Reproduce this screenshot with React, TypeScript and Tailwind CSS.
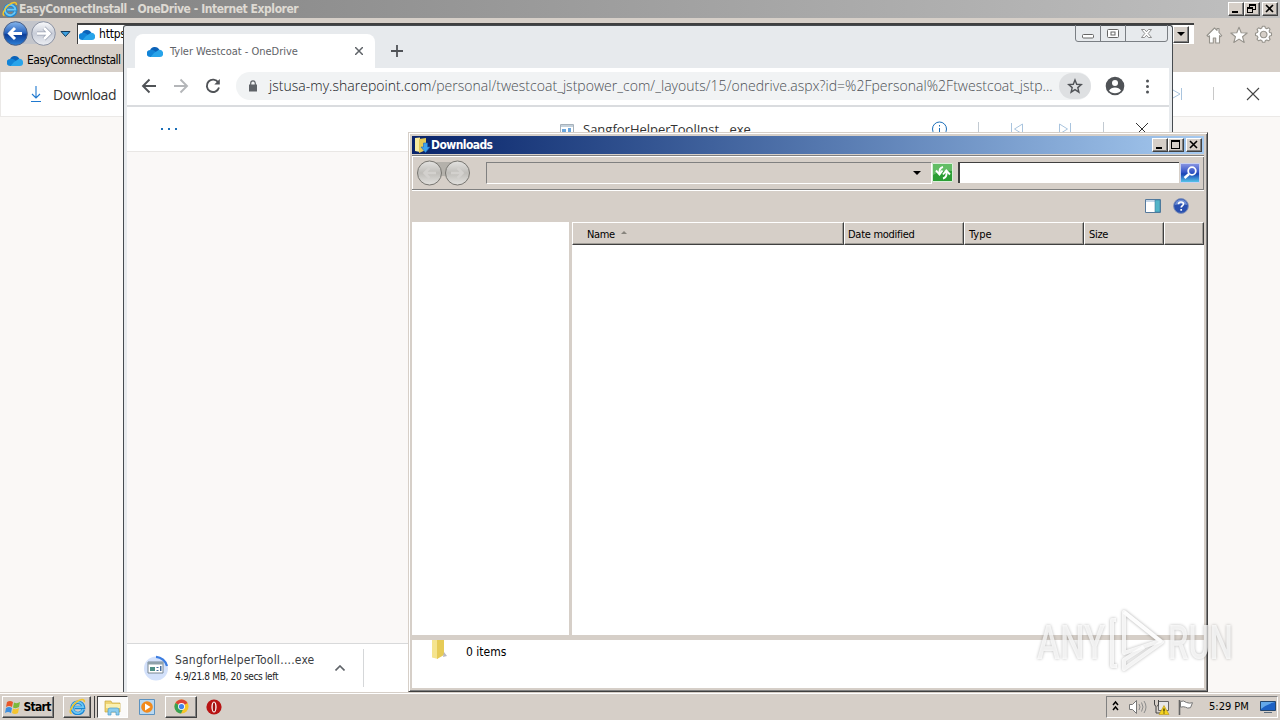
import type { ReactNode } from 'react'
import clsx from 'clsx'

const RAISED = 'border border-t-white border-l-white border-r-[#404040] border-b-[#404040] bg-[#d6cfc8] shadow-[inset_-1px_-1px_0_#808080]'

const OneDrive = ({ className }: { className?: string }) => (
  <svg viewBox="0 0 16 11" className={clsx('h-[11px] w-4 shrink-0', className)}>
    <path d="M3 4.5A5 5 0 0 1 12.4 4L9 9 2 8z" fill="#0b62b8" />
    <path d="M3.2 4a3.5 3.5 0 0 0 0 7H8l4-3-5-3.4A4 4 0 0 0 3.2 4z" fill="#1184d8" />
    <path d="M7 7l5-3.2A3.6 3.6 0 0 1 13 11H3.5z" fill="#28a4ea" />
  </svg>
)

const IeLogo = ({ className }: { className?: string }) => (
  <svg viewBox="0 0 16 16" className={clsx('shrink-0', className)}>
    <path d="M13.4 10.8A5.3 5.3 0 1 1 13.6 8.9H5.2" fill="none" stroke="#1c87d4" strokeWidth="3.4" />
    <path d="M13.2 10.5A5.2 5.2 0 1 1 13.4 8.6H5.2" fill="none" stroke="#6cc7f4" strokeWidth="1.8" />
    <path d="M2.500 14.500C-.6 14 2 8.200 6.500 4.200 10.200 1 15 .2 14.400 4" fill="none" stroke="#f2c52c" strokeWidth="1.500" />
  </svg>
)

interface CaptionProps {
  kind: 'min' | 'max' | 'restore' | 'close'
}

const Caption = ({ kind }: CaptionProps) => (
  <div className={clsx('h-[14px] w-4', RAISED)}>
    <svg viewBox="0 0 14 12" className="h-3 w-[14px]" fill="none" stroke="#000" shapeRendering="crispEdges">
      {kind === 'min' && <path d="M3 9h6" strokeWidth="2" />}
      {kind === 'max' && <path d="M2.500 1.500h8v8h-8zM2 2.500h9" />}
      {kind === 'restore' && <path d="M4.500 4V1.500h6v5H8M4 2.500h6M2.500 4.500h5v5h-5zM2 5.500h6" />}
      {kind === 'close' && <path d="M3 2l7 7M10 2L3 9" strokeWidth="1.600" shapeRendering="auto" />}
    </svg>
  </div>
)

const Explorer16 = ({ className }: { className?: string }) => (
  <svg viewBox="0 0 18 18" className={clsx('shrink-0', className)}>
    <path d="M1 3h6l1 2h8v9H1z" fill="#efd473" stroke="#c9a63d" strokeWidth=".7" />
    <path d="M2 6h14v4H2z" fill="#fbf0b0" />
    <path d="M4 17v-5q0-2 2-2h7q2 0 2 2v5h-3v-3H7v3z" fill="#8ccdee" stroke="#4a9cc9" strokeWidth=".7" />
  </svg>
)

const IeWindow = () => (
  <div className="absolute inset-0 flex flex-col">
    {/* Title bar */}
    <div className="flex h-[18px] items-center bg-linear-to-r from-[#808080] to-[#c0c0c0] pr-[2px] pl-[2px]">
      <IeLogo className="h-4 w-4" />
      <span className="ml-[1px] text-[12px] font-bold tracking-[-0.44px] text-[#dedad3]">EasyConnectInstall - OneDrive - Internet Explorer</span>
      <div className="ml-auto flex">
        <Caption kind="min" />
        <Caption kind="restore" />
        <div className="w-[2px]" />
        <Caption kind="close" />
      </div>
    </div>

    {/* Navigation row */}
    <div className="flex h-[30px] items-center bg-[#d6cfc8]">
      <svg viewBox="0 0 75 30" className="h-[30px] w-[75px] shrink-0">
        <defs>
          <linearGradient id="ieBack" x2="0" y2="1">
            <stop offset="0" stopColor="#86b6ec" />
            <stop offset=".48" stopColor="#2863be" />
            <stop offset=".55" stopColor="#0c3d98" />
            <stop offset="1" stopColor="#2f82d8" />
          </linearGradient>
          <linearGradient id="ieFwd" x2="0" y2="1">
            <stop offset="0" stopColor="#fafafc" />
            <stop offset=".5" stopColor="#c8cdd8" />
            <stop offset="1" stopColor="#eceef3" />
          </linearGradient>
        </defs>
        <path d="M15 3H44V26H15z" fill="#c3c5cb" />
        <circle cx="15.500" cy="15.500" r="11.800" fill="url(#ieBack)" stroke="#4a5f86" />
        <circle cx="43.500" cy="15.500" r="11.800" fill="url(#ieFwd)" stroke="#8c93a3" />
        <path d="M22 15.500H10M15 10l-5.500 5.500L15 21" fill="none" stroke="#fff" strokeWidth="3" />
        <path d="M37 15.500h12M44 10l5.500 5.500L44 21" fill="none" stroke="#9ba2b2" strokeWidth="4" />
        <path d="M37 15.500h12M44 10l5.500 5.500L44 21" fill="none" stroke="#fff" strokeWidth="2.600" />
        <path d="M61 13.500h9l-4.500 5z" fill="#3da0e0" stroke="#123a5c" />
      </svg>
      <div className="ml-[2px] flex h-[21px] w-[1117px] items-center border-t-2 border-l border-[#404040] bg-white pl-[1px]">
        <OneDrive />
        <span className="ml-1 text-[12px] tracking-[-0.2px] text-black">https</span>
        <div className={clsx('mr-[5px] ml-auto flex h-[17px] w-4 items-center justify-center', RAISED)}>
          <div className="border-x-4 border-t-4 border-x-transparent border-t-black" />
        </div>
      </div>
      <svg viewBox="0 0 72 20" className="mt-[3px] mr-[2px] ml-auto h-5 w-[72px]" fill="#fff" stroke="#96938c" strokeWidth="1.100" strokeLinejoin="round">
        <path d="M1 10.500L8.500 3l2.500 2.400V3.500h2v4l2.700 3-1.200 1.200-1-1V18h-3.800v-5H7.300v5H3.500v-7.300l-1 1z" />
        <path d="M33 2.200l2.200 5.500 6 .3-4.700 3.700 1.700 5.800-5.200-3.400-5.200 3.400 1.700-5.800L24.800 8l6-.3z" />
        <path d="M55.700 3l.8-1.800h2.300l.6 1.900 1.300.6 1.900-1 1.500 1.600-1 1.800.6 1.400 1.800.6v2.300l-1.800.7-.6 1.300 1 1.900-1.600 1.500-1.800-.9-1.300.5-.6 1.900h-2.300l-.7-1.900-1.400-.5-1.800.9-1.600-1.600 1-1.700-.6-1.400-1.900-.6V8.200l1.900-.7.6-1.300-1-1.900 1.600-1.500 1.800.9zM57.600 6.200a3.300 3.300 0 1 0 .1 0z" fillRule="evenodd" />
      </svg>
    </div>

    {/* Tab row */}
    <div className="flex h-6 items-center bg-[#d6cfc8] pl-[7px]">
      <OneDrive />
      <span className="ml-1 text-[12px] tracking-[-0.5px] text-black">EasyConnectInstall</span>
    </div>

    {/* OneDrive command bar */}
    <div className="flex h-[45px] items-center border-b border-l border-[#ebe9e7] bg-white pl-[28px]">
      <svg viewBox="0 0 14 18" className="h-[18px] w-[14px]" fill="none" stroke="#2079cf" strokeWidth="1.100">
        <path d="M7 1v12M3 9l4 4 4-4M2 16.500h10" />
      </svg>
      <span className="mt-[2px] ml-[10px] font-[Open_Sans] text-[14px] tracking-[-0.4px] text-[#333]">Download</span>
      <svg viewBox="0 0 100 20" className="mr-[12px] ml-auto h-5 w-[100px]" fill="none">
        <path d="M5 6l7 4-7 4M13.500 4v12" stroke="#a9c4de" />
        <path d="M45.500 3v13" stroke="#c8c8c8" />
        <path d="M79 4l12 12M91 4L79 16" stroke="#444" strokeWidth="1.100" />
      </svg>
    </div>
  </div>
)

const ChromeWindow = () => (
  <div className="absolute top-[25px] left-[123px] flex h-[667px] w-[1050px] flex-col rounded-t-[3px] border border-b-0 border-[#464b50] bg-[#e7eaed] pr-[3px] pl-[3px]">
    {/* Tab strip */}
    <div className="relative flex h-[42px] items-end">
      <div className="ml-2 flex h-[34px] w-[240px] items-center rounded-t-[8px] bg-white pr-3 pl-3">
        <OneDrive />
        <span className="ml-[7px] text-[11px] tracking-[-0.02px] text-[#5f6368]">Tyler Westcoat - OneDrive</span>
        <svg viewBox="0 0 8 8" className="ml-auto h-2 w-2" stroke="#5f6368" strokeWidth="1.500">
          <path d="M0 0l8 8M8 0L0 8" />
        </svg>
      </div>
      <svg viewBox="0 0 12 12" className="mb-[11px] ml-4 h-3 w-3" stroke="#505357" strokeWidth="1.800">
        <path d="M6 0v12M0 6h12" />
      </svg>
      <svg viewBox="0 0 94 18" className="absolute -top-px right-0 h-[18px] w-[94px]" fill="none" stroke="#7a7e83">
        <path d="M.5 0v14q0 2.500 2.500 2.500h87q2.500 0 2.500-2.500V0M25.500 0v16M50.500 0v16" />
        <rect x="7.500" y="9.500" width="11" height="3.500" rx="1" fill="#fff" stroke="#666" />
        <rect x="32.500" y="4.500" width="11" height="8" rx="1" fill="#fff" stroke="#666" />
        <rect x="36" y="7" width="4" height="3" stroke="#666" />
        <path d="M66.500 4.500h3l2 2.200 2-2.200h3l-3.300 4 3.300 4h-3l-2-2.200-2 2.200h-3l3.300-4z" fill="#fff" stroke="#777" strokeWidth=".8" />
      </svg>
    </div>

    {/* Address bar */}
    <div className="flex h-[39px] items-center border-b-2 border-[#dadcdf] bg-white pb-[2px]">
      <svg viewBox="0 0 109 28" className="h-7 w-[109px] shrink-0" fill="none" stroke="#505357" strokeWidth="1.900">
        <path d="M29 14H16M22.500 7.500L16 14l6.500 6.500" />
        <path d="M47 14h13M53.500 7.500L60 14l-6.500 6.500" stroke="#b4b6b9" />
        <path d="M91.300 10.500A6.200 6.200 0 1 0 92 15.500" />
        <path d="M92.800 7v5.500h-5.500z" fill="#505357" stroke="none" />
      </svg>
      <div className="flex h-7 w-[855px] items-center rounded-full bg-[#f1f3f4] pr-0 pl-3">
        <svg viewBox="0 0 10 12" className="h-3 w-[10px]">
          <path d="M1 4.500h8V11.500H1z" fill="#5f6368" />
          <path d="M2.700 5V3.200a2.300 2.300 0 0 1 4.600 0V5" fill="none" stroke="#5f6368" strokeWidth="1.200" />
        </svg>
        <span className="ml-[11px] font-[Open_Sans] text-[14px] font-light tracking-[0.026px] whitespace-nowrap text-[#4c5054]">
          <span className="text-[#17191c]">jstusa-my.sharepoint.com</span>
          /personal/twestcoat_jstpower_com/_layouts/15/onedrive.aspx?id=%2Fpersonal%2Ftwestcoat_jstp...
        </span>
        <div className="ml-auto flex h-[26px] w-8 shrink-0 items-center justify-center rounded-full bg-[#dee0e2]">
          <svg viewBox="0 0 16 16" className="h-4 w-4" fill="none" stroke="#505357" strokeWidth="1.400">
            <path d="M8 2l1.700 4.300 4.600.3-3.500 3 1.100 4.500L8 11.600l-3.900 2.500 1.100-4.500-3.500-3 4.600-.3z" />
          </svg>
        </div>
      </div>
      <svg viewBox="0 0 60 20" className="ml-[14px] h-5 w-[60px]" fill="#505357">
        <circle cx="10" cy="10" r="9.300" />
        <circle cx="10" cy="7" r="3" fill="#fff" />
        <path d="M4 14.500q2-3 6-3t6 3q-2 2.800-6 2.800t-6-2.800z" fill="#fff" />
        <circle cx="42.500" cy="5" r="1.500" />
        <circle cx="42.500" cy="10.500" r="1.500" />
        <circle cx="42.500" cy="16" r="1.500" />
      </svg>
    </div>

    {/* File viewer bar */}
    <div className="flex h-[45px] items-center border-b border-[#e9e7e5] bg-white">
      <div className="ml-[34px] flex gap-[5px]">
        <div className="h-[2px] w-[2px] bg-[#1b6fb8]" />
        <div className="h-[2px] w-[2px] bg-[#1b6fb8]" />
        <div className="h-[2px] w-[2px] bg-[#1b6fb8]" />
      </div>
      <svg viewBox="0 0 14 12" className="mt-[2px] ml-[383px] h-3 w-[14px]">
        <path d="M.5.500h13v11H.500z" fill="#fff" stroke="#a6b1ba" />
        <path d="M1 1h12v2H1z" fill="#c4d0da" />
        <path d="M2 5h4v6H2zM8 4h3v7H8z" fill="#6ba6dc" />
      </svg>
      <span className="ml-[9px] font-[Open_Sans] text-[13px] text-[#333]">SangforHelperToolInst...exe</span>
      <svg viewBox="0 0 230 20" className="mr-[11px] ml-auto h-5 w-[230px]" fill="none">
        <circle cx="11.500" cy="10" r="7" stroke="#1c6fba" />
        <path d="M11.500 9v5M11.500 6v1.500" stroke="#1c6fba" />
        <path d="M50.500 3v13M175.500 3v13" stroke="#c2cad2" />
        <path d="M83.500 4v12M94.500 5v10l-8-5zM131.500 5v10l8-5zM142.500 4v12" stroke="#a9c4de" />
        <path d="M208 4l12 12M220 4l-12 12" stroke="#333" />
      </svg>
    </div>
    <div className="flex-1 bg-[#faf8f7]" />

    {/* Download shelf */}
    <div className="flex h-[49px] items-center border-t border-[#d8d9da] bg-white pl-4">
      <svg viewBox="0 0 26 26" className="h-[26px] w-[26px]">
        <circle cx="13" cy="13.500" r="12" fill="#d3e1fb" />
        <path d="M13 1.800A12 12 0 0 1 24 11" fill="none" stroke="#3b7ce0" strokeWidth="2.200" />
        <path d="M5 7h15v11H5z" fill="#fff" stroke="#788792" />
        <path d="M5 7h15v2.500H5z" fill="#8fa1ab" />
        <path d="M7 12h5v4H7z" fill="#4e8f86" />
        <path d="M13.500 12h2v1h-2zM13.500 15h2v1h-2zM17 11h1.500v5H17z" fill="#456b9c" />
      </svg>
      <div className="ml-[6px] flex w-[140px] flex-col whitespace-nowrap">
        <span className="text-[12px] leading-[17px] tracking-[0.2px] text-[#3c4043]">SangforHelperToolI....exe</span>
        <span className="text-[10px] leading-[16px] tracking-[-0.33px] text-[#202124]">4.9/21.8 MB, 20 secs left</span>
      </div>
      <svg viewBox="0 0 10 6" className="ml-5 h-[6px] w-[10px]" fill="none" stroke="#5f6368" strokeWidth="1.600">
        <path d="M.5 5.500L5 1l4.500 4.500" />
      </svg>
      <div className="ml-[18px] h-[38px] w-px bg-[#d5d7d9]" />
    </div>
  </div>
)

const COLUMNS = [
  { label: 'Name', className: 'w-[272px] pl-[14px] tracking-[-0.4px]', sorted: true },
  { label: 'Date modified', className: 'w-[120px] pl-[3px] tracking-[-0.27px]' },
  { label: 'Type', className: 'w-[120px] pl-1' },
  { label: 'Size', className: 'w-20 pl-1 tracking-[-0.3px]' },
  { label: '', className: 'w-10' },
]

const ExplorerWindow = () => (
  <div className="absolute top-[132px] left-[408px] flex h-[560px] w-[800px] flex-col border border-t-[#d6cfc8] border-r-[#404040] border-b-[#404040] border-l-[#d6cfc8] bg-[#d6cfc8] p-[3px] shadow-[inset_1px_1px_0_#fff,inset_-1px_-1px_0_#808080]">
    {/* Title bar */}
    <div className="flex h-[18px] shrink-0 items-center bg-linear-to-r from-[#0a246a] to-[#a6caf0] pr-[2px] pl-[2px]">
      <svg viewBox="0 0 16 16" className="h-4 w-4">
        <path d="M1 1l5-.5V15L1 14z" fill="#f8eba0" />
        <path d="M5 2l7-1v12l-7 3z" fill="#e5c955" />
        <path d="M9.500 6h4v4H16l-4.500 5.500L7 10h2.500z" fill="#3da1ee" stroke="#1b65bd" strokeWidth=".6" />
      </svg>
      <span className="ml-[1px] text-[12px] font-bold tracking-[-0.57px] text-white">Downloads</span>
      <div className="ml-auto flex">
        <Caption kind="min" />
        <Caption kind="max" />
        <div className="w-[2px]" />
        <Caption kind="close" />
      </div>
    </div>

    {/* Navigation bar */}
    <div className="mt-[1px] flex h-[35px] shrink-0 items-center border-t border-b border-[#808080] shadow-[inset_1px_1px_0_#fff,inset_-1px_0_0_#808080]">
      <svg viewBox="0 0 64 28" className="ml-1 h-7 w-16">
        <defs>
          <linearGradient id="navGray" x2="0" y2="1">
            <stop offset="0" stopColor="#e4e3e1" />
            <stop offset=".5" stopColor="#bfbdb9" />
            <stop offset="1" stopColor="#e3e2df" />
          </linearGradient>
        </defs>
        <path d="M14 3h26v17q-13-6-26 0z" fill="#b4b1ab" />
        <circle cx="13.500" cy="14" r="12" fill="url(#navGray)" stroke="#777570" />
        <circle cx="41.500" cy="14" r="12" fill="url(#navGray)" stroke="#777570" />
        <path d="M20 14H9M13.500 9L8.500 14l5 5M35 14h11M41.500 9l5 5-5 5" fill="none" stroke="#d3d1ce" strokeWidth="2.500" />
      </svg>
      <div className="ml-[6px] flex h-[22px] w-[446px] shrink-0 items-center border border-t-[#808080] border-r-white border-b-white border-l-[#808080]">
        <div className="mr-[10px] ml-auto border-x-4 border-t-4 border-x-transparent border-t-black" />
      </div>
      <svg viewBox="0 0 22 20" className="h-5 w-[22px] shrink-0">
        <path d="M.5.500h20v18H.500z" fill="#2c9e35" stroke="#d9efd9" />
        <path d="M1 1h19v7Q10 7 1 12z" fill="#62bd65" />
        <path d="M11 4Q7 5 7.500 10M4 7.500l3.500 4 3-4" fill="none" stroke="#fff" strokeWidth="1.900" />
        <path d="M11 15.500q4-1 3.500-6.500M11 11.500l3.300-4 3.700 4" fill="none" stroke="#fff" strokeWidth="1.900" />
      </svg>
      <div className="ml-1 h-[21px] w-[221px] shrink-0 border-t border-l-2 border-t-[#404040] border-l-[#404040] bg-white" />
      <svg viewBox="0 0 20 20" className="ml-[1px] h-5 w-5 shrink-0">
        <defs>
          <linearGradient id="searchBlue" x2="0" y2="1">
            <stop offset="0" stopColor="#8b96e2" />
            <stop offset=".45" stopColor="#3556c8" />
            <stop offset=".55" stopColor="#1844b4" />
            <stop offset="1" stopColor="#59cbed" />
          </linearGradient>
        </defs>
        <path d="M.5.500h19v19H.500z" fill="url(#searchBlue)" stroke="#c8d0f0" />
        <circle cx="12" cy="8" r="3.800" fill="none" stroke="#fff" strokeWidth="1.800" />
        <path d="M9 11l-4.500 4" stroke="#fff" strokeWidth="2.400" />
      </svg>
    </div>

    {/* Command bar */}
    <div className="flex h-8 shrink-0 items-center justify-end border-t border-white pr-[15px] pb-[2px]">
      <svg viewBox="0 0 16 14" className="h-[14px] w-4">
        <path d="M.5.500h15v13H.500z" fill="#fff" stroke="#55799c" />
        <path d="M1 1h9v2H1z" fill="#c4d6e8" />
        <path d="M10 1h5v12h-5z" fill="#52b4c8" stroke="#3c7ca0" strokeWidth=".6" />
      </svg>
      <svg viewBox="0 0 16 16" className="ml-3 h-4 w-4">
        <circle cx="8" cy="8" r="7.400" fill="#2950b0" stroke="#8292b8" />
        <path d="M2 7a6 5.500 0 0 1 12 0q-6-2-12 0z" fill="#6f8fd4" />
        <path d="M5.500 6.200Q5.600 4 8 4t2.500 2c0 1.500-2.300 1.700-2.300 3.500M8.200 11v1.700" fill="none" stroke="#fff" strokeWidth="1.700" />
      </svg>
    </div>

    {/* Panes */}
    <div className="flex min-h-0 flex-1">
      <div className="w-[157px] bg-white" />
      <div className="w-[3px]" />
      <div className="flex-1 bg-white">
        <div className="flex h-[23px]">
          {COLUMNS.map((col) => (
            <div
              key={col.label}
              className={clsx('flex items-center border border-t-white border-r-[#404040] border-b-[#404040] border-l-white bg-[#d6cfc8] pt-[2px] text-[11px] text-black shadow-[inset_-1px_-1px_0_#a09d97]', col.className)}
            >
              {col.label}
              {col.sorted && <div className="mb-1 ml-[6px] border-x-[3px] border-b-[3px] border-x-transparent border-b-[#87847d]" />}
            </div>
          ))}
        </div>
      </div>
    </div>

    {/* Details */}
    <div className="mt-[5px] flex h-12 shrink-0 bg-white pl-[19px]">
      <svg viewBox="0 0 18 20" className="h-5 w-[18px]">
        <path d="M1 0h6v19l-6-1.500z" fill="#f5e48e" />
        <path d="M6 0h7v15l-7 4z" fill="#e6cb57" />
        <path d="M13 12l3 4-4 1z" fill="#b9b9c4" />
      </svg>
      <span className="ml-[17px] pt-[6px] text-[12px] text-black">0 items</span>
    </div>
  </div>
)

const Watermark = () => (
  <svg viewBox="0 0 250 76" className="absolute top-[603px] left-[1030px] h-[76px] w-[250px] overflow-visible drop-shadow-[0_0_1.500px_rgba(0,0,0,0.35)]">
    <g fill="#fff" fillOpacity=".75" fontFamily="Roboto" fontWeight="500" fontSize="49">
      <text x="7" y="56" textLength="68" lengthAdjust="spacingAndGlyphs">ANY</text>
      <text x="138" y="56" textLength="65" lengthAdjust="spacingAndGlyphs">RUN</text>
    </g>
    <g fill="none" stroke="#fff" strokeOpacity=".8" strokeWidth="4" strokeLinejoin="round">
      <path d="M94 9v41l36-12z" />
      <path d="M94 9l38 30-38 27v-9l20-13" />
      <path d="M86 17h-4v46h5" />
    </g>
  </svg>
)

const TaskButton = ({ children, className }: { children: ReactNode, className?: string }) => (
  <div className={clsx('flex h-[22px] items-center justify-center', className)}>{children}</div>
)

const Taskbar = () => (
  <div className="absolute top-[692px] left-0 flex h-7 w-full items-center border-t border-[#d6cfc8] bg-[#d6cfc8] pr-[2px] pl-[2px] shadow-[inset_0_1px_0_#fff,0_1px_0_#d6cfc8]">
    <TaskButton className={clsx('w-[52px] gap-[2px]', RAISED)}>
      <svg viewBox="0 0 16 16" className="h-4 w-4 shrink-0">
        <path d="M2 3q3-2 6 0L7 8Q4 6 1 8z" fill="#e8572a" />
        <path d="M9 3.500q3 1.500 6-.5l-1 5q-3 2-6 .5z" fill="#7bb93a" />
        <path d="M1 9q3-2 6 0l-1 5q-3-2-6 0z" fill="#3d8fe0" />
        <path d="M8 9.500q3 1.500 6-.5l-1 5q-3 2-6 0z" fill="#f5c42e" />
      </svg>
      <span className="text-[12px] font-bold tracking-[-0.7px] text-black">Start</span>
    </TaskButton>
    <TaskButton className={clsx('ml-[9px] w-7', RAISED)}>
      <IeLogo className="h-[17px] w-[17px]" />
    </TaskButton>
    <div className="h-[22px] w-1 border-r border-[#404040]" />
    <TaskButton className="ml-[2px] w-[31px] border border-t-[#404040] border-r-white border-b-white border-l-[#404040] bg-[#fbfaf9]">
      <Explorer16 className="h-[18px] w-[18px]" />
    </TaskButton>
    <TaskButton className="ml-[11px] w-4">
      <svg viewBox="0 0 16 16" className="h-4 w-4">
        <path d="M.5.500h15v15H.500z" fill="#b9d8f1" stroke="#5c92c0" />
        <circle cx="8" cy="8" r="5.800" fill="#f28a1c" />
        <path d="M6 4.500v7l5.500-3.500z" fill="#fff" />
      </svg>
    </TaskButton>
    <TaskButton className={clsx('ml-[10px] w-8', RAISED)}>
      <svg viewBox="0 0 16 16" className="h-[15px] w-[15px]">
        <circle cx="8" cy="8" r="7.500" fill="#f6c628" />
        <path d="M8 8L1.500 4.200A7.500 7.500 0 0 1 14.500 4.200z" fill="#dc4337" />
        <path d="M8 8L1.500 4.200A7.500 7.500 0 0 0 7.500 15.500L10 10z" fill="#36a155" />
        <circle cx="8" cy="8" r="3.700" fill="#fff" />
        <circle cx="8" cy="8" r="2.800" fill="#4283ec" />
      </svg>
    </TaskButton>
    <TaskButton className="ml-[9px] w-4">
      <svg viewBox="0 0 16 16" className="h-4 w-4">
        <circle cx="8" cy="8" r="7.600" fill="#b81414" />
        <ellipse cx="8" cy="8" rx="2.600" ry="5.500" fill="#fff" />
        <ellipse cx="8" cy="8" rx="1.300" ry="4.500" fill="#a01010" />
      </svg>
    </TaskButton>

    {/* Tray */}
    <div className="ml-auto flex h-[22px] w-[172px] items-center border border-t-[#808080] border-r-white border-b-white border-l-[#808080] pl-[5px]">
      <svg viewBox="0 0 82 18" className="h-[18px] w-[82px] shrink-0" fill="none">
        <path d="M1 7l2.500-3L6 7M1 12l2.500-3L6 12" stroke="#000" strokeWidth="1.500" />
        <path d="M17.500 6.500h3l4-4v13l-4-4h-3z" fill="#fff" stroke="#777" />
        <path d="M27 6q2 3 0 6M29.500 4.500q3 4.500 0 9M32 3q4 6 0 12" stroke="#8b8b8b" />
        <path d="M46.500 3.500h10v9h-10z" fill="#e8e8e8" stroke="#666" />
        <path d="M42.500 2v4q0 2 1.500 2v7h4M46.500 2v4q0 2-1.500 2" stroke="#444" />
        <path d="M52 7.500l5 9H47z" fill="#f5d31f" stroke="#b89310" strokeWidth=".6" />
        <path d="M52 10.500v3M52 14.500v1" stroke="#000" />
        <path d="M67.500 2v15" stroke="#666" strokeWidth="1.600" />
        <path d="M68.500 3.500q3-1.500 6 1 3 1.200 6 .2l-2 5q-3 1-5-.5-2-1-5 0z" fill="#fff" stroke="#777" />
      </svg>
      <span className="ml-[15px] text-[11px] whitespace-nowrap text-black">5:29 PM</span>
      <svg viewBox="0 0 16 14" className="mr-[1px] ml-auto h-[14px] w-4">
        <path d="M.5 1.500h15v9H.500z" fill="#1d61c4" stroke="#24476f" />
        <path d="M1 2h14q-8 2-14 7z" fill="#64a8ea" />
        <path d="M4 12.500h8" stroke="#5b6b7c" />
      </svg>
    </div>
  </div>
)

export default function App() {
  return (
    <div className="relative h-[720px] w-[1280px] overflow-hidden bg-[#faf8f6] font-[DejaVu_Sans_Condensed,DejaVu_Sans,sans-serif] leading-none">
      <IeWindow />
      <ChromeWindow />
      <ExplorerWindow />
      <Watermark />
      <Taskbar />
    </div>
  )
}
